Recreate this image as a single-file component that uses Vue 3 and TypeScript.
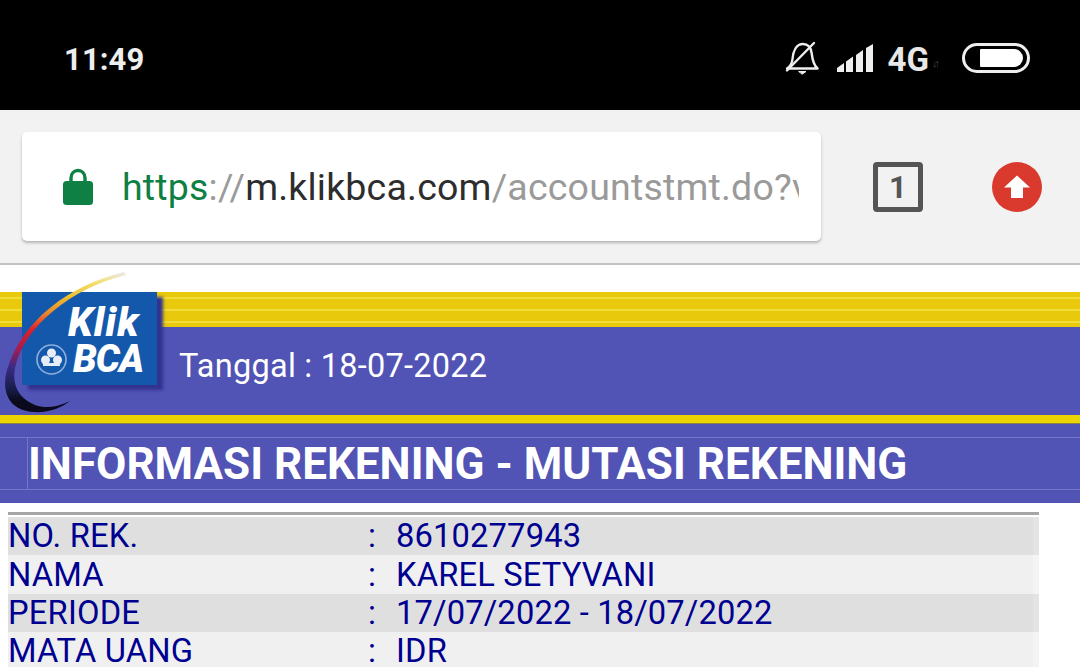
<script setup lang="ts">
interface Row { label: string; value: string }
const rows: Row[] = [
  { label: 'NO. REK.', value: '8610277943' },
  { label: 'NAMA', value: 'KAREL SETYVANI' },
  { label: 'PERIODE', value: '17/07/2022 - 18/07/2022' },
  { label: 'MATA UANG', value: 'IDR' },
]
</script>

<template>
  <div class="screen">
    <header class="status">
      <span class="time">11:49</span>
      <div class="status-icons">
        <svg class="bell" width="34" height="34" viewBox="0 0 34 34" fill="none" stroke="#eee" stroke-width="2.400" stroke-linecap="round" stroke-linejoin="round">
          <path d="M2 27.500c3-2 5-4.500 5.500-9.500C8.200 10 11.500 3 18 3c5 0 8 4 8.700 9.500.7 6 2.300 12 5.800 15H2z" />
          <path d="M14 30.500h7l-3.500 2.500z" fill="#eee" stroke-width="1" />
          <path d="M2 29.500 29 2" />
        </svg>
        <svg class="signal" width="37" height="28" viewBox="0 0 37 28" fill="#eee">
          <path d="M0 28v-4l7-5v9z" />
          <path d="M9 28V17.500l7-5V28z" />
          <path d="M19 28V11l7-5v22z" />
          <path d="M29 28V4l7-4v28z" />
        </svg>
        <span class="net">4G</span>
        <span class="arrows">↓↑</span>
        <div class="battery"><div class="battery-fill"></div></div>
      </div>
    </header>

    <section class="toolbar">
      <div class="address">
        <svg class="lock" width="32" height="40" viewBox="0 0 32 40">
          <path d="M9 19v-7c0-4.500 3-7.500 7-7.500s7 3 7 7.500v7" fill="none" stroke="#0f8043" stroke-width="3.400" />
          <rect x="1" y="15" width="30" height="24" rx="3.500" fill="#0f8043" />
        </svg>
        <div class="url"><span class="https">https</span><span class="scheme">://</span><span class="host">m.klikbca.com</span><span class="path">/accountstmt.do?v</span></div>
      </div>
      <div class="tabs">1</div>
      <div class="upload">
        <svg width="28" height="28" viewBox="0 0 28 28"><path d="M14 2.500 27 14.500h-7V25H8V14.500H1z" fill="#fff" /></svg>
      </div>
    </section>

    <section class="banner">
      <div class="gap"></div>
      <div class="stripes"></div>
      <div class="date-band"><span class="date">Tanggal : 18-07-2022</span></div>
      <div class="yellow"></div>

      <div class="logo">
        <div class="logo-box">
          <span class="klik">Klik</span>
          <span class="bca">BCA</span>
          <svg class="emblem" width="33" height="33" viewBox="0 0 33 33">
            <circle cx="16.500" cy="16.500" r="14.500" fill="none" stroke="#8fb0dc" stroke-width="1.600" />
            <circle cx="16.500" cy="10" r="4.500" fill="#e6edf7" />
            <circle cx="10.500" cy="17" r="4.500" fill="#e6edf7" />
            <circle cx="22.500" cy="17" r="4.500" fill="#e6edf7" />
            <rect x="8" y="20" width="17" height="3" fill="#e6edf7" />
          </svg>
        </div>
        <svg class="swoosh" width="132" height="146" viewBox="0 0 132 146" fill="none">
          <defs>
            <linearGradient id="sw" x1="0" y1="0" x2="0" y2="1">
              <stop offset="0" stop-color="#e9e9f5" />
              <stop offset="0.07" stop-color="#f3e27a" />
              <stop offset="0.17" stop-color="#efc12f" />
              <stop offset="0.29" stop-color="#ec8a2a" />
              <stop offset="0.41" stop-color="#e0202a" />
              <stop offset="0.55" stop-color="#a01d50" />
              <stop offset="0.68" stop-color="#3a2a86" />
              <stop offset="0.82" stop-color="#1a2050" />
              <stop offset="0.92" stop-color="#0a0a1c" />
            </linearGradient>
          </defs>
          <path d="M124 2C70 15 22 50 7 100c-6 22 2 40 26 42 16 1 28-4 37-11-12 6-24 8-35 4C18 128 12 114 15 98 24 56 72 18 126 5z" fill="url(#sw)" />
        </svg>
      </div>
    </section>

    <section class="title-band">
      <div class="title-inner">
        <h1 class="title">INFORMASI REKENING - MUTASI REKENING</h1>
      </div>
    </section>

    <section class="details">
      <div class="table">
        <div v-for="(row, i) in rows" :key="row.label" class="row" :class="{ odd: i % 2 === 1 }">
          <span class="label">{{ row.label }}</span>
          <span class="colon">:</span>
          <span class="value">{{ row.value }}</span>
        </div>
      </div>
    </section>
  </div>
</template>

<style>
html, body { margin: 0; background: #fff; overflow: hidden; }
</style>

<style scoped>
.screen { width: 1080px; height: 667px; overflow: hidden; font-family: Roboto, "Liberation Sans", sans-serif; background: #fff; }

.status { height: 110px; background: #000; display: flex; align-items: center; justify-content: space-between; padding: 8px 50px 0 64px; box-sizing: border-box; color: #eee; }
.time { font-size: 31px; font-weight: 700; letter-spacing: 0.1px; }
.status-icons { display: flex; align-items: center; }
.bell { margin-right: 18px; margin-bottom: 2px; }
.signal { margin-right: 14px; margin-bottom: 3px; }
.net { font-size: 33px; font-weight: 700; color: #e8e8e8; }
.arrows { font-size: 11px; color: #444; width: 14px; letter-spacing: -3px; margin: 8px 16px 0 3px; }
.battery { width: 68px; height: 30px; margin-bottom: 2px; box-sizing: border-box; border: 3px solid #eee; border-radius: 15px; padding: 3px 4px 3px 15px; }
.battery-fill { height: 100%; background: #fff; border-radius: 1px 9px 9px 1px; }

.toolbar { height: 155px; box-sizing: border-box; background: #f2f2f2; border-bottom: 2px solid #c2c2c2; display: flex; align-items: flex-start; padding: 22px 0 0 22px; }
.address { width: 799px; height: 109px; background: #fff; border-radius: 5px; box-shadow: 0 2px 3px rgba(0,0,0,0.25); display: flex; align-items: center; padding: 0 22px 0 40px; box-sizing: border-box; }
.lock { flex: none; margin-right: 28px; margin-top: -2px; }
.url { font-size: 37.500px; white-space: nowrap; overflow: hidden; flex: 1; letter-spacing: 0.2px; }
.https { color: #0f8043; }
.scheme, .path { color: #9a9a9a; }
.host { color: #2d2d2d; }
.tabs { width: 50px; height: 50px; box-sizing: border-box; margin: 30px 0 0 52px; border: 5px solid #555; border-radius: 4px; display: flex; align-items: center; justify-content: center; color: #555; font-size: 31px; font-weight: 700; line-height: 1; }
.upload { width: 50px; height: 50px; margin: 30px 0 0 69px; border-radius: 50%; background: #d93a2d; display: flex; align-items: center; justify-content: center; }

.banner { position: relative; height: 159px; }
.gap { height: 27px; background: #fff; }
.stripes { height: 35px; background: repeating-linear-gradient(#e8c90c 0 5px, #f2dc3a 5px 7px, #e8c90c 7px 12px); }
.date-band { height: 88px; background: #5153b5; display: flex; align-items: center; padding: 0 0 10px 179px; box-sizing: border-box; }
.date { color: #fff; font-size: 32.500px; letter-spacing: 0.25px; }
.yellow { height: 9px; background: #ecd400; box-shadow: inset 0 -1px 0 #8a8440; }

.logo { position: absolute; left: 0; top: 5px; width: 176px; height: 150px; }
.logo-box { position: absolute; left: 22px; top: 22px; width: 135px; height: 93px; background: #1458ac; box-shadow: 6px 5px 3px #33338f; }
.klik { position: absolute; left: 46px; top: 15px; color: #fff; font: italic 900 40px/0.8 Roboto, "Liberation Sans", sans-serif; letter-spacing: 1px; }
.bca { position: absolute; left: 51px; top: 53px; color: #fff; font: italic 900 38px/0.75 Roboto, "Liberation Sans", sans-serif; letter-spacing: -1px; }
.emblem { position: absolute; left: 13px; top: 51px; }
.swoosh { position: absolute; left: 0; top: 0; }

.title-band { height: 79px; background: #5153b5; box-sizing: border-box; padding-top: 13px; }
.title-inner { height: 53px; box-sizing: border-box; border-top: 1px solid #7476c8; border-bottom: 1px solid #7476c8; padding-left: 27px; }
.title { margin: 0; height: 100%; border-left: 1px solid #7476c8; color: #fff; font-size: 44px; font-weight: 700; line-height: 53px; white-space: nowrap; }

.details { padding: 9px 0 0 8px; }
.table { width: 1031px; border-top: 3px solid #a6a6a6; padding-top: 2px; }
.row { height: 38.400px; background: #dfdfdf; display: flex; align-items: center; color: #000090; font-size: 32.700px; white-space: nowrap; border-right: 6px solid #e4e4e4; box-sizing: border-box; }
.row.odd { background: #f0f0f0; border-right-color: #f4f4f4; }
.label { width: 360px; box-sizing: border-box; letter-spacing: 0.2px; }
.colon { width: 28px; }
.value { letter-spacing: 0.15px; }
</style>
